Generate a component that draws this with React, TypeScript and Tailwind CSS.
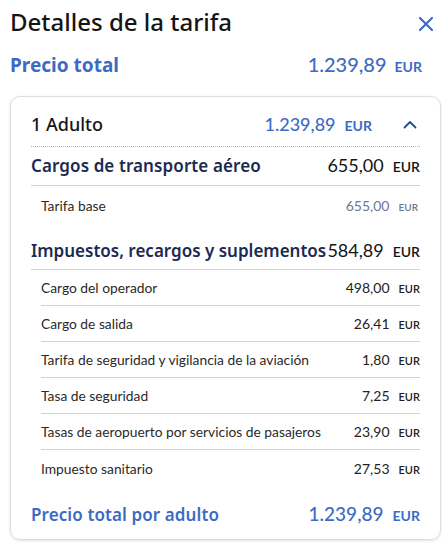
const rows = [
  { label: "Cargo del operador", amount: "498,00" },
  { label: "Cargo de salida", amount: "26,41" },
  { label: "Tarifa de seguridad y vigilancia de la aviación", amount: "1,80" },
  { label: "Tasa de seguridad", amount: "7,25" },
  { label: "Tasas de aeropuerto por servicios de pasajeros", amount: "23,90" },
  { label: "Impuesto sanitario", amount: "27,53" },
];

const heading = "font-['Noto_Sans',sans-serif]";

function Eur({ className }: { className: string }) {
  return <span className={className}>EUR</span>;
}

export default function App() {
  return (
    <div className="w-[442px] h-[553px] bg-white font-['Lato',sans-serif] overflow-hidden">
      <div className="flex items-center justify-between pl-[10px] pr-[8px] pt-[6px] h-[38px]">
        <h1 className={`${heading} text-[24px] font-medium text-[#151515]`}>Detalles de la tarifa</h1>
        <svg width="16" height="16" viewBox="0 0 16 16" className="mt-[4px]">
          <path d="M2 2 L14 14 M14 2 L2 14" stroke="#3d6bc4" strokeWidth="2.2" strokeLinecap="round" />
        </svg>
      </div>

      <div className="flex items-baseline justify-between pl-[10px] pr-[20px] mt-[11px]">
        <span className={`${heading} text-[19px] font-bold text-[#3d6bc4]`}>Precio total</span>
        <span className="text-[#3d6bc4]">
          <span className="text-[20px] font-medium">1.239,89</span>
          <Eur className="text-[14px] font-bold ml-[8px]" />
        </span>
      </div>

      <div className="ml-[10px] w-[431px] mt-[16px] rounded-[10px] border border-[#dedede] shadow-[0_1px_3px_rgba(0,0,0,0.12)] px-[20px]">
        <div className="flex items-center justify-between h-[50px] pt-[6px] border-b border-dotted border-[#b5b5b5]">
          <span className={`${heading} text-[18px] font-medium text-[#151515]`}>1 Adulto</span>
          <span className="flex items-baseline text-[#3d6bc4]">
            <span className="text-[18px] font-medium">1.239,89</span>
            <Eur className="text-[14px] font-bold ml-[9px]" />
            <svg width="14" height="9" viewBox="0 0 14 9" className="ml-[31px] mr-[3px] self-center">
              <path d="M1.5 7.5 L7 2 L12.5 7.5" fill="none" stroke="#2b4c8c" strokeWidth="1.8" strokeLinecap="round" strokeLinejoin="round" />
            </svg>
          </span>
        </div>

        <div className="flex items-center h-[39px] border-b border-[#d4d4d4]">
          <div className="flex flex-1 items-baseline justify-between">
            <span className={`${heading} text-[17px] font-semibold text-[#1b2a52] tracking-[0.1px]`}>Cargos de transporte aéreo</span>
            <span className="text-[#151515] whitespace-nowrap">
              <span className="text-[18px]">655,00</span>
              <Eur className="text-[14px] font-semibold ml-[9px]" />
            </span>
          </div>
        </div>

        <div className="flex items-center h-[36px] pl-[10px] pr-[2px] pt-[2px]">
          <div className="flex flex-1 items-baseline justify-between">
            <span className="text-[13.8px] text-[#2a2a2a]">Tarifa base</span>
            <span className="text-[#6c7894] whitespace-nowrap">
              <span className="text-[14px]">655,00</span>
              <Eur className="text-[10px] font-semibold ml-[9px]" />
            </span>
          </div>
        </div>

        <div className="flex items-center h-[48px] pt-[10px] border-b border-[#d4d4d4]">
          <div className="flex flex-1 items-baseline justify-between">
            <span className={`${heading} text-[17px] font-semibold text-[#1b2a52] whitespace-nowrap`}>Impuestos, recargos y suplementos</span>
            <span className="text-[#151515] whitespace-nowrap">
              <span className="text-[18px]">584,89</span>
              <Eur className="text-[14px] font-semibold ml-[9px]" />
            </span>
          </div>
        </div>

        <div className="pl-[10px]">
          {rows.map((r, i) => (
            <div
              key={r.label}
              className={
                "flex items-center h-[36px] " +
                (i < rows.length - 1 ? "border-b border-[#d4d4d4]" : "")
              }
            >
              <div className="flex flex-1 items-baseline justify-between">
                <span className="text-[13.8px] text-[#2a2a2a]">{r.label}</span>
                <span className="text-[#222] whitespace-nowrap">
                  <span className="text-[14px]">{r.amount}</span>
                  <Eur className="text-[11px] font-semibold ml-[9px]" />
                </span>
              </div>
            </div>
          ))}
        </div>

        <div className="flex items-center h-[53px] pt-[5px]">
          <div className="flex flex-1 items-baseline justify-between">
            <span className={`${heading} text-[17px] font-semibold text-[#3d6bc4] tracking-[0.1px]`}>Precio total por adulto</span>
            <span className="text-[#3d6bc4] whitespace-nowrap">
              <span className="text-[19px] font-medium">1.239,89</span>
              <Eur className="text-[14px] font-bold ml-[9px]" />
            </span>
          </div>
        </div>
      </div>
    </div>
  );
}
